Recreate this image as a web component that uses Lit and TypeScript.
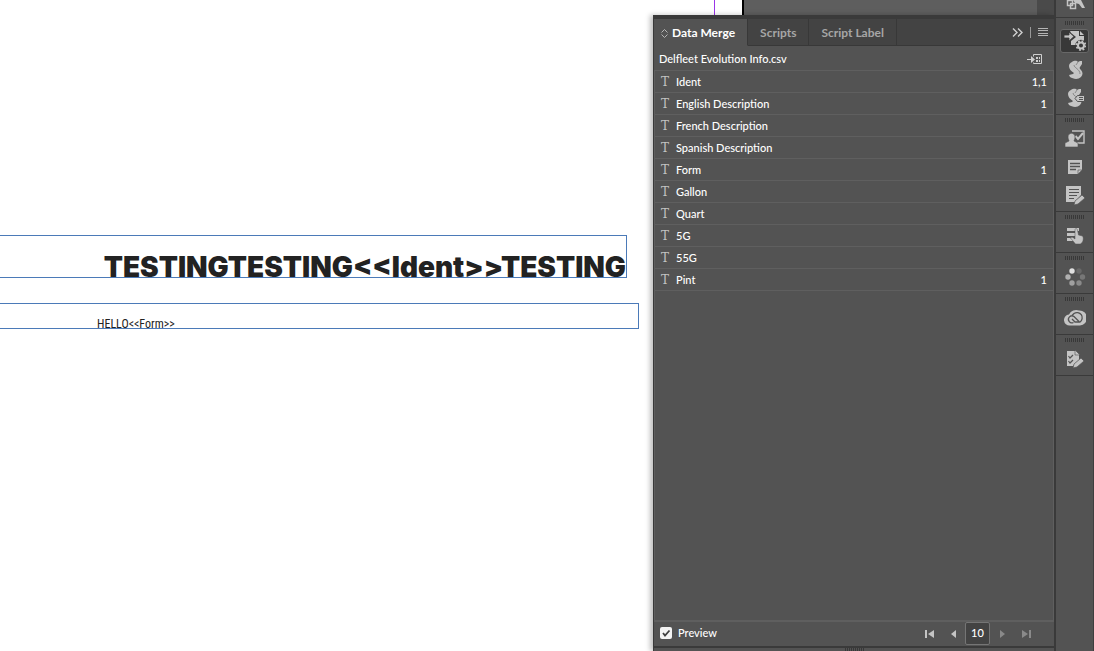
import { LitElement, html, svg, css } from "lit";
import { customElement, state } from "lit/decorators.js";

interface Field { name: string; used: string }

const FIELDS: Field[] = [
  { name: "Ident", used: "1,1" },
  { name: "English Description", used: "1" },
  { name: "French Description", used: "" },
  { name: "Spanish Description", used: "" },
  { name: "Form", used: "1" },
  { name: "Gallon", used: "" },
  { name: "Quart", used: "" },
  { name: "5G", used: "" },
  { name: "55G", used: "" },
  { name: "Pint", used: "1" },
];

const ICONS = {
  links: svg`<path d="M2.500 5.500h5v5h-5zM5.500 8.500h5v5h-5z" fill="none" stroke="#c4c4c4" stroke-width="1.500"/><path d="M8 5h8l4 8h-3l-3-4-4-1z"/>`,
  merge: svg`<path d="M5 1h9v5h5v5h-4l-4 4H6v-4l5-4-5-4z"/><path d="M15 1l4 4h-4z"/><path d="M-1 5h5V2l5 4.500L4 11V8h-5z" stroke="#383838" stroke-width=".8"/><circle cx="16" cy="15.500" r="5.800" fill="#383838"/><circle cx="16" cy="15.500" r="3" fill="none" stroke="#c4c4c4" stroke-width="2"/><circle cx="16" cy="15.500" r="4.500" fill="none" stroke="#c4c4c4" stroke-width="1.800" stroke-dasharray="1.767 1.767"/>`,
  script: svg`<path d="M7 3c3-2 5-1 6 0l2-1 2 0v3l-2 3c-1 1 0 2 1 3 2 2 2 5 0 7-3 3-8 2-11 0l-1-2 4-1 1-1c-3-2-5-4-5-7 0-2 1-3 3-4z"/><path d="M9 6c0 3 6 4 6 9M13 3l-2 3" fill="none" stroke="#8a8a8a"/>`,
  label: svg`<path d="M6 3c3-2 5-1 6 0l2-1 2 0v3l-2 3c-1 1 0 2 1 3 2 2 2 5 0 7-3 3-8 2-11 0l-1-2 4-1 1-1c-3-2-5-4-5-7 0-2 1-3 3-4z"/><path d="M8 6c0 3 5 4 5 6M12 3l-2 3" fill="none" stroke="#8a8a8a"/><path d="M12.500 8.500h7v6h-7l-2.500-3z" stroke="#535353"/><path d="M14 10.500h4M14 12.500h4" stroke="#535353"/>`,
  review: svg`<path d="M7 3h12v12h-7" fill="none" stroke="#c4c4c4" stroke-width="1.400"/><path d="M10.500 8l2.500 3 5-6" fill="none" stroke="#c4c4c4" stroke-width="2"/><path d="M3 9c0-5 7-5 7 0 0 2-1 3-1 4l4 2v4H0v-4l4-2c0-1-1-2-1-4z" stroke="#535353" stroke-width=".6"/>`,
  note: svg`<path d="M3 4h14v10l-4 4H3z"/><path d="M13 18v-4h4z" stroke="#535353" stroke-width=".6"/><path d="M5 7.500h10M5 10.500h10M5 13.500h6" stroke="#535353" stroke-width="1.300"/>`,
  edits: svg`<path d="M1 2h15v9l-6 7H1z"/><path d="M4 5.500h10M4 8.500h10M4 11.500h8M4 14.500h5" stroke="#535353" stroke-width="1.200"/><path d="M9 21l1-4 7-6 3 3-7 6z" stroke="#535353" stroke-width=".7"/>`,
  touch: svg`<path d="M2 3h12v3H2zM2 8h9v3H2zM2 13h7v3H2z"/><path d="M10 5c0-2 2-2 2.500 0l1 5 4 1c1 1 1 4 0 6l-2 2h-5l-5-6c1-1 2-1 4.500 1z" stroke="#535353" stroke-width=".5"/>`,
  spinner: svg`<circle cx="7" cy="5" r="2.700" fill="#e0e0e0"/><circle cx="14" cy="5" r="2.700" fill="#696969"/><circle cx="17.500" cy="11" r="2.700" fill="#777"/><circle cx="14" cy="17" r="2.700" fill="#8a8a8a"/><circle cx="7" cy="17" r="2.700" fill="#a0a0a0"/><circle cx="3" cy="11" r="2.700" fill="#b0b0b0"/>`,
  cloud: svg`<path d="M5 18.500a5.500 5.500 0 0 1-1-11 8 8 0 0 1 10-4 7.500 7.500 0 0 1 1 15z"/><path d="M14 14.500l-5-5a3.500 3.500 0 1 0-.5 6M7 8.500l2-2a5 5 0 1 1 6 8.500h-5l-3-3" fill="none" stroke="#535353" stroke-width="1.300"/>`,
  proof: svg`<path d="M2 3h8l4 4v5l-6 6H2z"/><path d="M10 2l5 5h-5z" stroke="#535353" stroke-width=".6"/><path d="M3.500 8l1.500 2 3-3M3.500 13l1.500 2 3-3" fill="none" stroke="#535353" stroke-width="1.200"/><path d="M8 20l1-4 7-6 3 3-7 6z" stroke="#535353" stroke-width=".7"/>`,
};

type IconName = keyof typeof ICONS;

const DOCK: { name: IconName; label: string }[][] = [
  [
    { name: "merge", label: "Data Merge" },
    { name: "script", label: "Scripts" },
    { name: "label", label: "Script Label" },
  ],
  [
    { name: "review", label: "Assignments" },
    { name: "note", label: "Notes" },
    { name: "edits", label: "Track Changes" },
  ],
  [{ name: "touch", label: "Buttons and Forms" }],
  [{ name: "spinner", label: "Background Tasks" }],
  [{ name: "cloud", label: "CC Libraries" }],
  [{ name: "proof", label: "Preflight" }],
];

@customElement("tool-dock")
class ToolDock extends LitElement {
  static styles = css`
    :host {
      display: block;
      background: #535353;
      border-left: 2px solid #3a3a3a;
      border-right: 1px solid #3e3e3e;
      overflow: hidden;
    }
    .group {
      display: flex;
      flex-direction: column;
      align-items: center;
      padding-bottom: 2px;
      border-bottom: 1px solid #3a3a3a;
    }
    .group.cut {
      height: 17px;
      padding: 0;
      justify-content: flex-end;
    }
    .grip {
      width: 19px;
      height: 4px;
      margin: 3px 0;
      background: repeating-linear-gradient(90deg, #383838 0 1px, #535353 1px 2px);
    }
    button {
      display: grid;
      place-items: center;
      box-sizing: border-box;
      width: 29px;
      height: 28px;
      padding: 0;
      border: 0;
      border-radius: 3px;
      background: none;
    }
    button.on {
      background: #383838;
      border: 1px solid #686868;
      height: 24px;
      margin: 1px 0 3px;
    }
    svg {
      display: block;
      fill: #c4c4c4;
    }
  `;

  render() {
    return html`
      <div class="group cut">
        <button aria-label="Links">
          <svg width="22" height="22" viewBox="-1 0 22 22">${ICONS.links}</svg>
        </button>
      </div>
      ${DOCK.map(
        (group, g) => html`<div class="group">
          <div class="grip"></div>
          ${group.map(
            (item, i) => html`<button class=${g + i === 0 ? "on" : ""} aria-label=${item.label}>
              <svg width="22" height="22" viewBox="-1 0 22 22">${ICONS[item.name]}</svg>
            </button>`
          )}
        </div>`
      )}
    `;
  }
}

@customElement("merge-panel")
class MergePanel extends LitElement {
  static styles = css`
    :host {
      display: flex;
      flex-direction: column;
      background: #535353;
      border-top: 4px solid #3a3a3a;
      border-left: 1px solid #3a3a3a;
      box-shadow: -3px 0 5px rgba(0, 0, 0, 0.25);
      color: #fff;
      font: 500 11px/14px "Lato", sans-serif;
    }
    button {
      display: grid;
      place-items: center;
      margin: 0;
      padding: 0;
      border: 0;
      background: none;
      color: inherit;
      font: inherit;
    }
    svg {
      display: block;
    }
    .tabs {
      display: flex;
      height: 27px;
      background: #434343;
    }
    .tab {
      box-sizing: border-box;
      display: flex;
      align-items: center;
      gap: 4px;
      padding: 2px 12px 0;
      border-right: 1px solid #383838;
      border-bottom: 1px solid #383838;
      color: #a6a6a6;
      font: 700 12px/16px "Lato", sans-serif;
    }
    .tab.on {
      padding: 2px 12px 0 7px;
      background: #535353;
      border-bottom-color: #535353;
      color: #fff;
    }
    .tools {
      flex: 1;
      display: flex;
      align-items: center;
      justify-content: flex-end;
      gap: 7px;
      padding-right: 6px;
      border-bottom: 1px solid #383838;
    }
    .source {
      box-sizing: border-box;
      display: flex;
      align-items: center;
      justify-content: space-between;
      height: 24px;
      padding: 2px 12px 0 5px;
    }
    .list {
      flex: 1;
      margin: 0;
      padding: 0;
      list-style: none;
      border: 1px solid #5f5f5f;
      border-bottom-width: 2px;
    }
    .row {
      display: flex;
      align-items: center;
      box-sizing: border-box;
      height: 22px;
      padding: 0 6px;
      border-bottom: 1px solid #5f5f5f;
    }
    .type {
      width: 15px;
      color: #c4c4c4;
      font: 400 12px/14px "DejaVu Serif", serif;
    }
    .name {
      flex: 1;
    }
    .foot {
      display: flex;
      align-items: flex-start;
      height: 24px;
      padding: 0 16px 0 6px;
      border-bottom: 2px solid #3a3a3a;
    }
    .preview {
      display: flex;
      align-items: center;
      gap: 6px;
      height: 22px;
      margin-right: auto;
    }
    .box {
      appearance: none;
      width: 12px;
      height: 12px;
      margin: 0;
      border-radius: 2px;
      background: #f4f4f4;
    }
    .check {
      display: grid;
    }
    .check > * {
      grid-area: 1 / 1;
    }
    .check svg {
      pointer-events: none;
    }
    .nav {
      display: flex;
      align-items: center;
    }
    .nav button {
      width: 24px;
      height: 22px;
    }
    .page {
      box-sizing: border-box;
      width: 25px;
      height: 23px;
      padding: 0 0 2px;
      border: 1px solid #757575;
      border-radius: 2px;
      background: #434343;
      color: #fff;
      font: inherit;
      text-align: center;
    }
    .next {
      display: flex;
      justify-content: center;
      height: 3px;
    }
    .grip {
      width: 19px;
      background: repeating-linear-gradient(90deg, #383838 0 1px, #535353 1px 2px);
    }
  `;

  @state() private preview = true;

  render() {
    return html`
      <div class="tabs">
        <button class="tab on">
          <svg width="7" height="9" viewBox="0 0 7 9" fill="none" stroke="#b5b5b5"><path d="M.5 3.500L3.500 .5 6.500 3.500M.5 5.500L3.500 8.500 6.500 5.500" /></svg>
          Data Merge
        </button>
        <button class="tab">Scripts</button>
        <button class="tab">Script Label</button>
        <div class="tools">
          <button aria-label="Collapse">
            <svg width="11" height="9" viewBox="0 0 11 9" fill="none" stroke="#d0d0d0" stroke-width="1.400"><path d="M1 .5l4 4-4 4M6 .5l4 4-4 4" /></svg>
          </button>
          <svg width="1" height="11" viewBox="0 0 1 11"><path d="M0 0h1v11H0z" fill="#999" /></svg>
          <button aria-label="Panel menu">
            <svg width="10" height="8" viewBox="0 0 10 8" stroke="#b5b5b5"><path d="M0 .5h10M0 2.500h10M0 5.500h10M0 7.500h10" /></svg>
          </button>
        </div>
      </div>
      <div class="source">
        <span>Delfleet Evolution Info.csv</span>
        <button aria-label="Create merged document">
          <svg width="15" height="10" viewBox="0 0 15 10"><path d="M0 5h4V2l4 3.500L4 9V6H0z" fill="#d0d0d0" /><path d="M6.500 2.500v-2h8v9h-8v-1" fill="none" stroke="#d0d0d0" /><path d="M9 3h2v2H9zM12 3h1v2h-1zM9 6h2v2H9zM12 6h1v2h-1z" fill="#d0d0d0" /></svg>
        </button>
      </div>
      <ul class="list">
        ${FIELDS.map(
          (f) => html`<li class="row"><span class="type">T</span><span class="name">${f.name}</span><span>${f.used}</span></li>`
        )}
      </ul>
      <div class="foot">
        <label class="preview">
          <span class="check">
            <input class="box" type="checkbox" .checked=${this.preview} @change=${() => (this.preview = !this.preview)} />
            <svg width="12" height="12" viewBox="0 0 12 12" fill="none" stroke="#404040" stroke-width="1.800">${this.preview ? svg`<path d="M3 6l2 2.500 4.500-5" />` : ""}</svg>
          </span>
          Preview
        </label>
        <div class="nav">
          <button aria-label="First record"><svg width="9" height="8" viewBox="0 0 9 8" fill="#c4c4c4"><path d="M0 0h2v8H0zM9 0v8L3 4z" /></svg></button>
          <button aria-label="Previous record"><svg width="5" height="8" viewBox="0 0 5 8" fill="#c4c4c4"><path d="M5 0v8L0 4z" /></svg></button>
          <input class="page" aria-label="Record" value="10" />
          <button aria-label="Next record"><svg width="5" height="8" viewBox="0 0 5 8" fill="#8a8a8a"><path d="M0 0v8l5-4z" /></svg></button>
          <button aria-label="Last record"><svg width="9" height="8" viewBox="0 0 9 8" fill="#8a8a8a"><path d="M9 0H7v8h2zM0 0v8l6-4z" /></svg></button>
        </div>
      </div>
      <div class="next"><div class="grip"></div></div>
    `;
  }
}

@customElement("app-root")
class AppRoot extends LitElement {
  static styles = css`
    :host {
      display: grid;
      grid-template-columns: minmax(0, 1fr) 401px 40px;
      height: 100vh;
      overflow: hidden;
      background: #fff;
    }
    .page {
      padding-top: 235px;
      color: #222;
    }
    .frame {
      display: flex;
      align-items: flex-end;
      justify-content: flex-end;
      box-sizing: border-box;
      border: 1px solid #4b7ab8;
      border-left: 0;
      white-space: nowrap;
    }
    .title {
      height: 43px;
      margin: 0 26px 25px 0;
      font: 900 28px/20px "Inter", sans-serif;
    }
    .body {
      height: 26px;
      margin-right: 14px;
      justify-content: flex-start;
      padding-left: 97px;
      font: 400 12px/8px "Liberation Sans Narrow", "Roboto Condensed", "Open Sans Condensed", sans-serif;
    }
    .side {
      display: flex;
      flex-direction: column;
      min-height: 0;
    }
    .behind {
      display: flex;
      height: 15px;
    }
    .sheet {
      box-sizing: border-box;
      width: 91px;
      padding-left: 61px;
      border-right: 2px solid #000;
    }
    .guide {
      width: 1px;
      height: 15px;
      background: #9a35e8;
    }
    .pasteboard {
      flex: 1;
      background: #5e5e5e;
      border-right: 17px solid #4a4a4a;
    }
    merge-panel {
      flex: 1;
    }
  `;

  render() {
    return html`
      <main class="page">
        <div class="frame title"><span>TESTINGTESTING&lt;&lt;Ident&gt;&gt;TESTING</span></div>
        <div class="frame body"><span>HELLO&lt;&lt;Form&gt;&gt;</span></div>
      </main>
      <div class="side">
        <div class="behind">
          <div class="sheet"><div class="guide"></div></div>
          <div class="pasteboard"></div>
        </div>
        <merge-panel></merge-panel>
      </div>
      <tool-dock></tool-dock>
    `;
  }
}
